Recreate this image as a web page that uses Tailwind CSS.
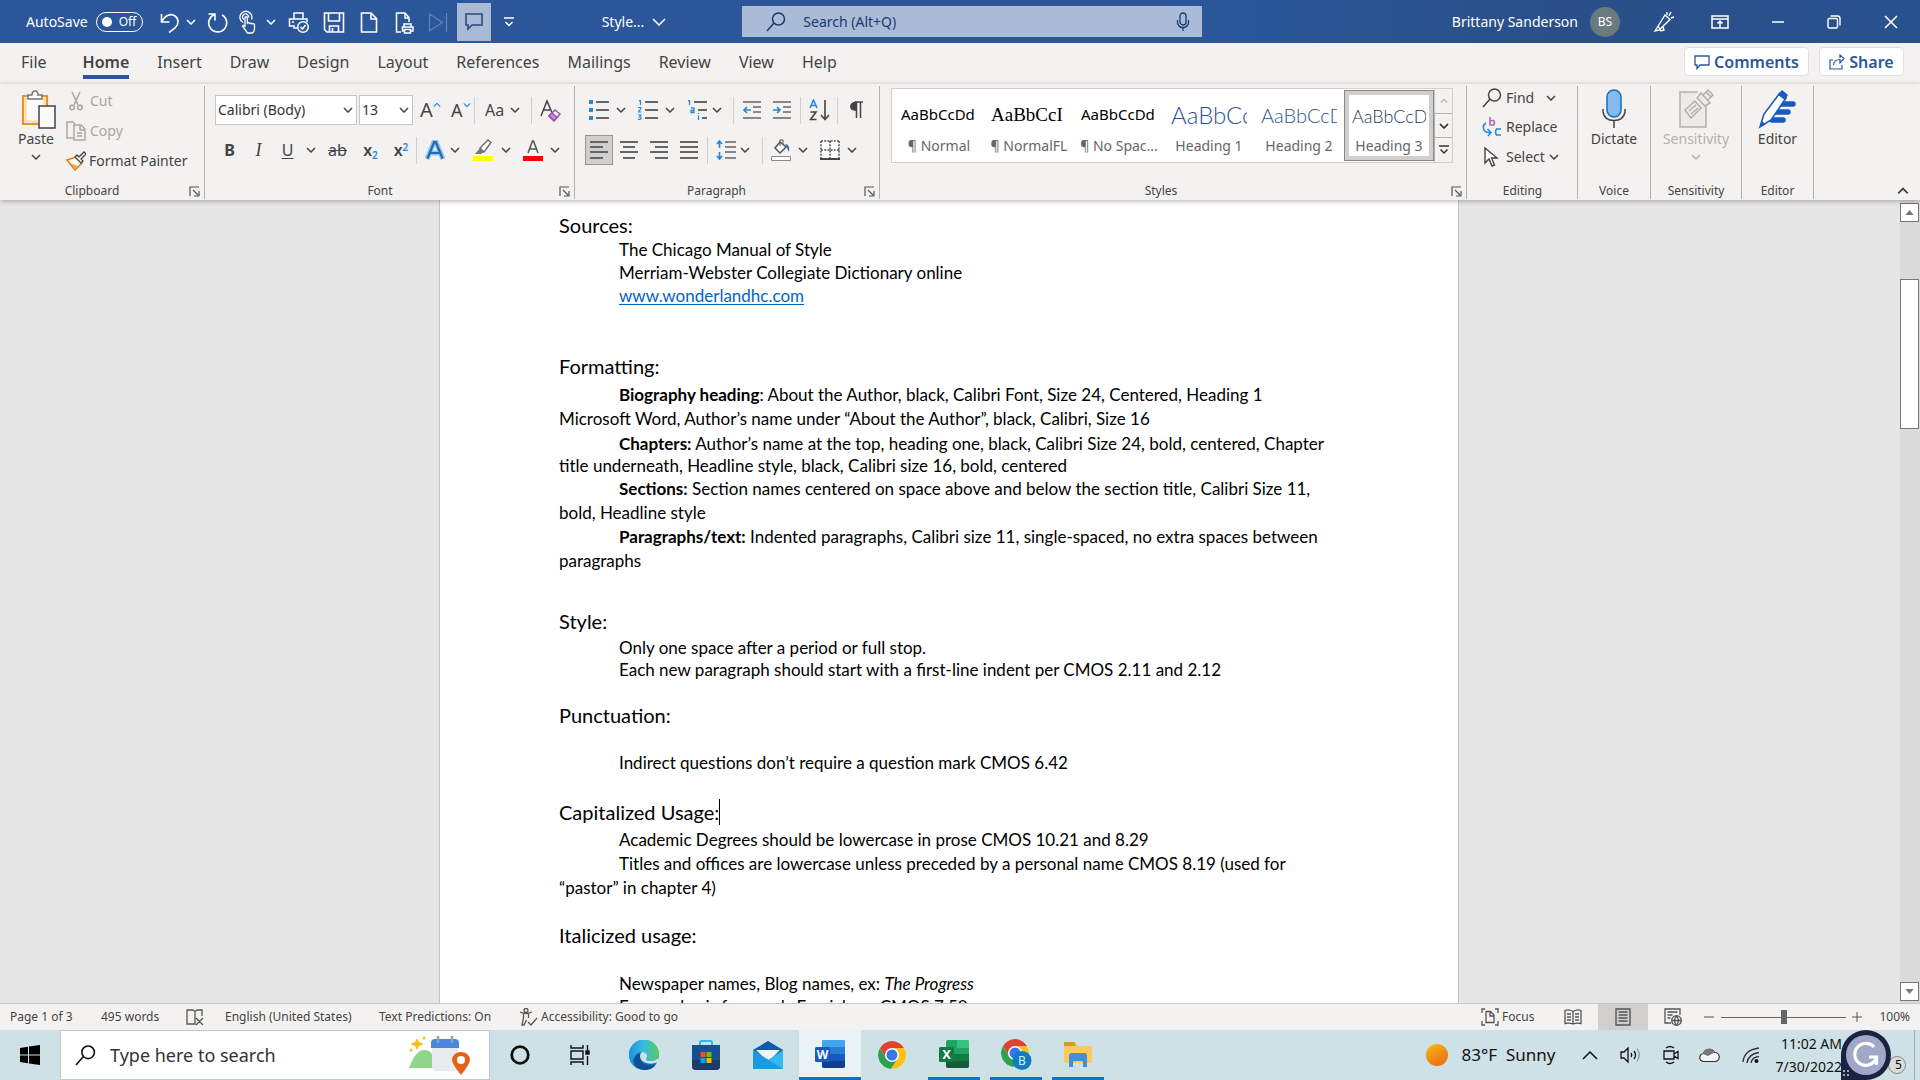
<!DOCTYPE html>
<html lang="en">
<head>
<meta charset="utf-8">
<title>Style Sheet - Word</title>
<script src="https://cdn.jsdelivr.net/npm/@tailwindcss/browser@4"></script>
</head>
<body class="flex h-screen flex-col overflow-hidden bg-[#e6e6e6] font-['Noto_Sans',sans-serif] text-sm text-[#444]">

<svg class="hidden" aria-hidden="true">
  <symbol id="chev" viewBox="0 0 10 6"><path d="M1 1l4 4 4-4" fill="none" stroke="currentColor" stroke-width="1.5"/></symbol>
  <symbol id="launch" viewBox="0 0 11 11"><path d="M1 10V1h9M4 4l5 5M10 5v5H5" fill="none" stroke="#555" stroke-width="1.2"/></symbol>
  <symbol id="lens" viewBox="0 0 20 20"><path d="M1 19l7-8" fill="none" stroke="currentColor" stroke-width="1.5"/><circle cx="12.500" cy="7" r="6" fill="none" stroke="currentColor" stroke-width="1.500"/></symbol>
  <symbol id="chrome" viewBox="0 0 30 30"><circle cx="15" cy="15" r="14" fill="#fff"/><path d="M2.900 8A14 14 0 0 1 27.100 8L15 8.500 9 18.500z" fill="#df4232"/><path d="M2.900 8A14 14 0 0 0 14 29l7-10.500L15 21.500 9 18.500z" fill="#2ba24c"/><path d="M27.100 8A14 14 0 0 1 14 29l7-10.500L20.500 12 15 8z" fill="#fbc116"/><circle cx="15" cy="15" r="7" fill="#fff"/><circle cx="15" cy="15" r="5.500" fill="#3a76e8"/></symbol>
</svg>

<!-- Title bar -->
<header class="flex h-[43px] shrink-0 items-center bg-[#2b579a] text-white">
  <label class="flex items-center gap-2 pl-[26px]">AutoSave
    <span class="relative flex h-5 w-[47px] items-center rounded-full border border-white pl-[22px] text-xs">
      <input type="checkbox" class="absolute left-[5px] h-2.5 w-2.5 appearance-none rounded-full bg-white">Off</span></label>
  <div class="flex items-center">
    <button class="ml-[17px] w-[20px]" aria-label="Undo"><svg class="h-6 w-5" viewBox="0 0 20 24" fill="none" stroke="#fff" stroke-width="1.600"><path d="M1.500 4v8h8M2 11.500C5 5 11 3 15 6s4 8 0 12l-6 4.500"/></svg></button>
    <button class="ml-[6px]" aria-label="Undo options"><svg class="h-1.5 w-2.5"><use href="#chev"/></svg></button>
    <button class="ml-[11px]" aria-label="Repeat"><svg class="h-6 w-[22px]" viewBox="0 0 22 24" fill="none" stroke="#fff" stroke-width="1.600"><path d="M1.500 4H8v6.500M7.500 4.500A9 9 0 1 0 15 5"/></svg></button>
    <button class="ml-[10px]" aria-label="Touch mode"><svg class="h-6 w-[18px]" viewBox="0 0 18 24" fill="none" stroke="#fff" stroke-width="1.300"><path d="M4 12.500a6 6 0 1 1 8.500-3M5 9.500a3 3 0 1 1 4.500-2M6 17V7.500q1.200-1.500 2.400 0V13q1.200-1 2.300.5 1.200-1 2.300.5 1.600-.8 2.500.5V19q-.5 3-2 4H8.500L3.500 16q1-1.500 2.500.5"/></svg></button>
    <button class="ml-[9px]" aria-label="Touch mode options"><svg class="h-1.5 w-2.5"><use href="#chev"/></svg></button>
    <button class="ml-[12px]" aria-label="Quick print"><svg class="h-6 w-[22px]" viewBox="0 0 22 24" fill="none" stroke="#fff" stroke-width="1.500"><path d="M6 9V3h9v6M9 18H6v-3M5 16H1.500V9H19v3M4 12h2"/><circle cx="15" cy="17" r="5.300"/><path d="M12.500 17l2 2 3-4"/></svg></button>
    <button class="ml-[13px]" aria-label="Save"><svg class="h-6 w-[22px]" viewBox="0 0 22 24" fill="none" stroke="#fff" stroke-width="1.600"><path d="M1.500 3h19v19H4l-2.500-2.500zM5.500 3v8h11V3M6.500 22v-6h9v6M9.500 18v4"/></svg></button>
    <button class="ml-[15px]" aria-label="New"><svg class="h-6 w-[18px]" viewBox="0 0 18 24" fill="none" stroke="#fff" stroke-width="1.600"><path d="M1.500 3H11l5.500 5.500V22h-15zM11 3v6h5.500"/></svg></button>
    <button class="ml-[17px]" aria-label="Print preview"><svg class="h-6 w-5" viewBox="0 0 20 24" fill="none" stroke="#fff" stroke-width="1.500"><path d="M6 22H1.500V3H10l4 4.500V12M10 3v5h4M9 17v-3h7v3M9 21H7.500v-4h10.500v4H16M9.500 19.500h6V23h-6z"/></svg></button>
    <button class="ml-[13px]" aria-label="Read aloud"><svg class="h-6 w-5" viewBox="0 0 20 24" fill="none" stroke="#6384b8" stroke-width="1.200"><path d="M1.500 4l13 8.500-13 8.500zM18.500 3v19"/></svg></button>
    <button class="ml-[9px] flex h-[38px] w-[34px] items-center justify-center bg-[#a9bad7]" aria-label="Comment"><svg class="h-5 w-[18px]" viewBox="0 0 18 20" fill="none" stroke="#2b4a80" stroke-width="1.600"><path d="M1 2h16v11H7l-4 4v-4H1z"/></svg></button>
    <button class="ml-[13px]" aria-label="Customize toolbar"><svg class="h-3 w-2.5" viewBox="0 0 10 12" fill="none" stroke="#fff" stroke-width="1.500"><path d="M0 2h10M1.500 6L5 9.500 8.500 6"/></svg></button>
  </div>
  <button class="ml-[88px] flex items-center gap-2">Style...<svg class="h-2 w-3.5" viewBox="0 0 14 8" fill="none" stroke="#fff" stroke-width="1.500"><path d="M1 1l6 6 6-6"/></svg></button>
  <label class="ml-[76px] flex h-[31px] w-[460px] items-center bg-[#a9bbd6] pr-3 pl-6 text-[#1b3a70]">
    <svg class="h-5 w-5"><use href="#lens"/></svg>
    <input class="ml-[17px] flex-1 outline-none placeholder:text-[#1b3a70]" placeholder="Search (Alt+Q)" aria-label="Search">
    <svg class="h-5 w-3.5" viewBox="0 0 14 20" fill="none" stroke="currentColor" stroke-width="1.300"><rect x="4" y="1" width="6" height="12" rx="3"/><path d="M1.500 8v3q1 4.500 5.500 4.500T12.500 11V8M7 15.500V19"/></svg>
  </label>
  <div class="flex h-full flex-1 items-center justify-end bg-linear-to-r from-[#2b579a] via-[#2a4f88] to-[#28518f] pr-[22px]">
    <span>Brittany Sanderson</span>
    <span class="ml-[12px] flex h-[30px] w-[30px] items-center justify-center rounded-full bg-[#6b7a80] text-xs">BS</span>
    <button class="ml-[33px]" aria-label="Draw"><svg class="h-[22px] w-[22px]" viewBox="0 0 22 22" fill="none" stroke="#fff" stroke-width="1.400"><path d="M2 20L12 4l5 4.500L6 19zM5 15l3 5 3-1-1-3M14 4V1M16 5l2-4M18 7l3-1"/></svg></button>
    <button class="ml-[36px]" aria-label="Ribbon display"><svg class="h-[18px] w-[18px]" viewBox="0 0 18 18" fill="none" stroke="#fff" stroke-width="1.500"><path d="M1 3h16v12H1zM1 6h16M9 14V8M6.500 10.500L9 8l2.500 2.500"/></svg></button>
    <button class="ml-[42px]" aria-label="Minimize"><svg class="h-3.5 w-3.5" viewBox="0 0 14 14"><path d="M1 7h12" stroke="#fff" stroke-width="1.500"/></svg></button>
    <button class="ml-[42px]" aria-label="Restore"><svg class="h-3.5 w-3.5" viewBox="0 0 14 14" fill="none" stroke="#fff" stroke-width="1.400"><rect x="1" y="3.500" width="9.500" height="9.500" rx="1.500"/><path d="M3.500 1h7q2.500 0 2.500 2.500v7"/></svg></button>
    <button class="ml-[43px]" aria-label="Close"><svg class="h-3.5 w-3.5" viewBox="0 0 14 14"><path d="M1 1l12 12M13 1L1 13" stroke="#fff" stroke-width="1.500"/></svg></button>
  </div>
</header>

<!-- Ribbon tabs -->
<nav class="flex h-[41px] shrink-0 items-center justify-between bg-[#f3f2f1] pr-4 pb-1 pl-[21px]">
  <div class="flex h-full items-center gap-7 text-base">
    <button class="mr-2">File</button>
    <button class="relative font-semibold">Home<span class="absolute inset-x-0 -bottom-[5px] h-1 bg-[#2b579a]"></span></button>
    <button>Insert</button><button>Draw</button><button>Design</button><button>Layout</button><button>References</button><button>Mailings</button><button>Review</button><button>View</button><button>Help</button>
  </div>
  <div class="flex gap-2.5 text-base font-semibold text-[#2b579a]">
    <button class="flex h-[29px] w-[125px] items-center justify-center gap-1 rounded-sm border border-[#e1dfdd] bg-white"><svg class="h-4 w-4" viewBox="0 0 16 16" fill="none" stroke="currentColor" stroke-width="1.300"><path d="M1 2h14v9H6l-3 3.500V11H1z"/></svg>Comments</button>
    <button class="flex h-[29px] w-[85px] items-center justify-center gap-1 rounded-sm border border-[#e1dfdd] bg-white"><svg class="h-4 w-4" viewBox="0 0 16 16" fill="none" stroke="currentColor" stroke-width="1.200"><path d="M4 6H1v9h12v-4M4.500 11Q5 5.500 11 5.500V9l4-4.500L11 1v3"/></svg>Share</button>
  </div>
</nav>

<!-- Ribbon -->
<section class="relative z-10 flex h-[116px] shrink-0 bg-[#f3f2f1] pt-[2px] pb-px shadow-[0_1px_5px_rgba(0,0,0,0.300)]">
  <!-- Clipboard -->
  <div class="flex w-[205px] flex-col border-r border-[#b3b0ad] pl-[15px]">
    <div class="flex flex-1">
      <button class="flex w-[42px] flex-col items-center justify-start pt-[3px]">
        <svg class="ml-1 h-10 w-9" viewBox="0 0 36 40"><path d="M3 7h24v28H3z" fill="#fff" stroke="#e8912d" stroke-width="2.200"/><path d="M5.500 9.500h19v23h-19z" fill="#fafafa" stroke="#fbdc9a" stroke-width="2"/><path d="M8 10V6h4q0-4 3-4t3 4h4v4z" fill="#fff" stroke="#777" stroke-width="1.500"/><path d="M19 17h16v22H19z" fill="#fafafa" stroke="#444" stroke-width="1.500"/></svg>
        Paste<svg class="mt-[5px] h-1.5 w-2.5"><use href="#chev"/></svg>
      </button>
      <div class="ml-[9px] flex flex-col">
        <button class="flex h-[30px] items-center gap-1 text-[#a8a6a4]"><svg class="h-5 w-5" viewBox="0 0 20 20" fill="none" stroke="currentColor" stroke-width="1.500"><path d="M6 1l6 13M14 1L8 14"/><circle cx="6" cy="16.500" r="2.300"/><circle cx="14" cy="16.500" r="2.300"/></svg>Cut</button>
        <button class="flex h-[30px] items-center gap-1 text-[#a8a6a4]"><svg class="h-5 w-5" viewBox="0 0 20 20" fill="none" stroke="currentColor" stroke-width="1.400"><path d="M8 17H1V1h6l2 2M8 4h7l4 4v11H8zM14 4v5h5M11 12h5M11 15h5"/></svg>Copy</button>
        <button class="flex h-[30px] items-center gap-[3px]"><svg class="h-5 w-5" viewBox="0 0 20 20"><path d="M1 9l9-3 6 6-7 7z" fill="#fff" stroke="#e07b1a" stroke-width="1.500"/><path d="M4 12l5 6 3-3z" fill="#f5a64a"/><path d="M9 6l2-2 2 2 5-5 2 2-5 5 2 2-2 2z" fill="#fff" stroke="#444" stroke-width="1.300"/></svg>Format Painter</button>
      </div>
    </div>
    <div class="flex items-center justify-between pr-1 text-xs"><span class="flex-1 pr-5 text-center">Clipboard</span><button aria-label="Clipboard settings"><svg class="h-[11px] w-[11px]"><use href="#launch"/></svg></button></div>
  </div>

  <!-- Font -->
  <div class="flex w-[370px] flex-col border-r border-[#b3b0ad] pl-2.5">
    <div class="mt-[9px] flex h-[30px] items-center">
      <div class="relative mr-0.5 w-[142px]"><select aria-label="Font" class="h-[30px] w-full appearance-none border border-[#c8c6c4] bg-white pl-0.5 text-[#333]"><option>Calibri (Body)</option></select><svg class="pointer-events-none absolute top-3 right-1 h-1.5 w-2.5"><use href="#chev"/></svg></div>
      <div class="relative w-[54px]"><select aria-label="Font size" class="h-[30px] w-full appearance-none border border-[#c8c6c4] bg-white pl-0.5 text-[#333]"><option>13</option></select><svg class="pointer-events-none absolute top-3 right-1 h-1.5 w-2.5"><use href="#chev"/></svg></div>
      <button class="ml-[7px] flex w-[26px] text-xl leading-6">A<svg class="mt-1 h-1.5 w-2 rotate-180 text-[#2b88d8]"><use href="#chev"/></svg></button>
      <button class="ml-[5px] flex w-[23px] text-lg leading-6">A<svg class="mt-1 h-1.5 w-2 text-[#2b88d8]"><use href="#chev"/></svg></button>
      <span class="h-[27px] w-px bg-[#d2d0ce]"></span>
      <button class="ml-[10px] flex items-center gap-1.5 text-base leading-6">Aa<svg class="h-1.5 w-2.5"><use href="#chev"/></svg></button>
      <span class="ml-[11px] h-[27px] w-px bg-[#d2d0ce]"></span>
      <button class="ml-[8px]" aria-label="Clear formatting"><svg class="h-6 w-[22px]" viewBox="0 0 22 24" fill="none" stroke-width="1.500"><path d="M1 18L7 3l6 14M3.500 12H10" stroke="#444"/><path d="M9 18l6-6 5 4-6 7z" fill="#f3f2f1" stroke="#9b4fae"/><path d="M9 18l3-3 5 4.500-3 3z" fill="#c88fd6" stroke="#9b4fae"/></svg></button>
    </div>
    <div class="mt-2.5 flex h-[30px] items-center text-base">
      <button class="w-[29px] font-bold">B</button>
      <button class="w-[29px] font-['Liberation_Serif',serif] text-lg italic">I</button>
      <button class="w-[29px] underline underline-offset-2">U</button>
      <button class="w-[18px] pl-1" aria-label="Underline options"><svg class="h-1.5 w-2.5"><use href="#chev"/></svg></button>
      <button class="w-[35px] line-through">ab</button>
      <button class="w-[31px] font-semibold">x<sub class="text-[10px] text-[#2b88d8]">2</sub></button>
      <button class="w-[30px] font-semibold">x<sup class="text-[10px] text-[#2b88d8]">2</sup></button>
      <span class="h-[27px] w-px bg-[#d2d0ce]"></span>
      <button class="ml-[8px] w-[20px]" aria-label="Text effects"><svg class="h-5 w-5" viewBox="0 0 20 20" fill="none"><path d="M2 19L9 2h2l7 17M5 13h10" stroke="#8ec3f0" stroke-width="5"/><path d="M2.500 18.500L9.200 2h1.600l6.700 16.500M5.500 13h9" stroke="#1f6bb8" stroke-width="2.200"/></svg></button>
      <button class="ml-[5px]" aria-label="Text effects options"><svg class="h-1.5 w-2.5"><use href="#chev"/></svg></button>
      <button class="ml-[13px]" aria-label="Highlight"><svg class="h-[22px] w-5" viewBox="0 0 20 22"><path d="M0 17h20v5H0z" fill="#ff0"/><path d="M7 9l8-8 3 2.500-7 9.500z" fill="#fff" stroke="#666" stroke-width="1.300"/><path d="M7 9l4 4-3 2H2z" fill="#777"/></svg></button>
      <button class="ml-2" aria-label="Highlight options"><svg class="h-1.5 w-2.5"><use href="#chev"/></svg></button>
      <button class="ml-[12px]" aria-label="Font colour"><svg class="h-[22px] w-5" viewBox="0 0 20 22"><path d="M0 17h20v5H0z" fill="#f00"/><path d="M5 14L9.500 2h1L15 14M6.500 10h7" fill="none" stroke="#555" stroke-width="1.500"/></svg></button>
      <button class="ml-[7px]" aria-label="Font colour options"><svg class="h-1.5 w-2.5"><use href="#chev"/></svg></button>
    </div>
    <div class="mt-auto flex items-center pr-1 text-xs"><span class="flex-1 pr-3.5 text-center">Font</span><button aria-label="Font settings"><svg class="h-[11px] w-[11px]"><use href="#launch"/></svg></button></div>
  </div>

  <!-- Paragraph -->
  <div class="flex w-[305px] flex-col border-r border-[#b3b0ad] pl-2.5">
    <div class="mt-[9px] flex h-[30px] items-center">
      <button class="ml-1" aria-label="Bullets"><svg class="h-5 w-5" viewBox="0 0 20 20"><path d="M0 0h4v4H0zM0 8h4v4H0zM0 16h4v4H0z" fill="#2b88d8"/><path d="M7 2h13M7 10h13M7 18h13" stroke="#666" stroke-width="1.800"/></svg></button>
      <button class="ml-[7px]" aria-label="Bullet options"><svg class="h-1.5 w-2.5"><use href="#chev"/></svg></button>
      <button class="ml-[12px]" aria-label="Numbering"><svg class="h-5 w-5" viewBox="0 0 20 20"><path d="M7 2h13M7 10h13M7 18h13" stroke="#666" stroke-width="1.800"/><path d="M1 1l1.500-1v5M0 8q3-1.500 3 0 0 1-3 4h3.500M0 15h3l-1.500 2q2 0 1.500 1.500T0 19" fill="none" stroke="#2b88d8" stroke-width="1.200"/></svg></button>
      <button class="ml-[7px]" aria-label="Numbering options"><svg class="h-1.5 w-2.5"><use href="#chev"/></svg></button>
      <button class="ml-[12px]" aria-label="Multilevel list"><svg class="h-5 w-5" viewBox="0 0 20 20"><path d="M7 2h13M11 10h9M15 18h5" stroke="#666" stroke-width="1.800"/><path d="M1 1l1.500-1v5M4 8h3v4.500H4v-2h3M11.500 15.500V20M11.500 13v1" fill="none" stroke="#2b88d8" stroke-width="1.300"/></svg></button>
      <button class="ml-[5px]" aria-label="Multilevel options"><svg class="h-1.5 w-2.5"><use href="#chev"/></svg></button>
      <span class="ml-[11px] h-[27px] w-px bg-[#d2d0ce]"></span>
      <button class="ml-[9px]" aria-label="Decrease indent"><svg class="h-5 w-[18px]" viewBox="0 0 18 20" fill="none" stroke-width="1.700"><path d="M0 2h18M10 7h8M10 12h8M0 18h18" stroke="#666"/><path d="M8 10H1M4 7l-3 3 3 3" stroke="#2b88d8"/></svg></button>
      <button class="ml-3" aria-label="Increase indent"><svg class="h-5 w-[18px]" viewBox="0 0 18 20" fill="none" stroke-width="1.700"><path d="M0 2h18M10 7h8M10 12h8M0 18h18" stroke="#666"/><path d="M0 10h7M4 7l3 3-3 3" stroke="#2b88d8"/></svg></button>
      <span class="ml-[9px] h-[27px] w-px bg-[#d2d0ce]"></span>
      <button class="ml-[8px]" aria-label="Sort"><svg class="h-[22px] w-[21px]" viewBox="0 0 21 22" fill="none" stroke-width="1.600"><path d="M1 9l3.500-8L8 9M2.500 6.500h4" stroke="#2b88d8"/><path d="M1.500 13H7l-5.500 7.500h6M16 1v19M12 16l4 4.500 4-4.500" stroke="#444"/></svg></button>
      <span class="ml-[7px] h-[27px] w-px bg-[#d2d0ce]"></span>
      <button class="ml-[11px]" aria-label="Show marks"><svg class="h-[18px] w-[14px]" viewBox="0 0 14 18"><path d="M6 1h8M7.500 1v16M11.500 1v16" fill="none" stroke="#444" stroke-width="1.500"/><path d="M7 .300v9.700Q1 9.500 1 5.500T7 .300z" fill="#444"/></svg></button>
    </div>
    <div class="mt-2.5 flex h-[30px] items-center">
      <button class="flex h-[30px] w-[28px] items-center justify-center border border-[#979593] bg-[#d0cfcd]" aria-label="Align left"><svg class="h-5 w-[18px]" viewBox="0 0 18 20"><path d="M0 2h18M0 7h13M0 12h18M0 18h13" stroke="#666" stroke-width="1.800"/></svg></button>
      <button class="ml-[7px]" aria-label="Centre"><svg class="h-5 w-[18px]" viewBox="0 0 18 20"><path d="M0 2h18M3 7h12M0 12h18M3 18h12" stroke="#666" stroke-width="1.800"/></svg></button>
      <button class="ml-3" aria-label="Align right"><svg class="h-5 w-[18px]" viewBox="0 0 18 20"><path d="M0 2h18M5 7h13M0 12h18M5 18h13" stroke="#666" stroke-width="1.800"/></svg></button>
      <button class="ml-3" aria-label="Justify"><svg class="h-5 w-[18px]" viewBox="0 0 18 20"><path d="M0 2h18M0 7h18M0 12h18M0 18h18" stroke="#666" stroke-width="1.800"/></svg></button>
      <span class="ml-[9px] h-[27px] w-px bg-[#d2d0ce]"></span>
      <button class="ml-[8px]" aria-label="Line spacing"><svg class="h-5 w-5" viewBox="0 0 20 20" fill="none" stroke-width="1.700"><path d="M9 2h11M9 7h11M9 12h11M9 18h11" stroke="#666"/><path d="M3.500 1v7M1 4l2.500-3L6 4M3.500 12v7M1 16l2.500 3L6 16" stroke="#2b88d8"/></svg></button>
      <button class="ml-1" aria-label="Line spacing options"><svg class="h-1.5 w-2.5"><use href="#chev"/></svg></button>
      <span class="ml-[12px] h-[27px] w-px bg-[#d2d0ce]"></span>
      <button class="ml-[8px]" aria-label="Shading"><svg class="h-[22px] w-5" viewBox="0 0 20 22"><path d="M.5 17.500h19v4H.5z" fill="#fff" stroke="#888"/><path d="M9 3l6 5-6 6-5-5z" fill="#fff" stroke="#555" stroke-width="1.500"/><path d="M9 7V1h3v4" fill="none" stroke="#555"/><path d="M14 5q5 0 4 8l-2-4z" fill="#1f6bb8"/></svg></button>
      <button class="ml-[7px]" aria-label="Shading options"><svg class="h-1.5 w-2.5"><use href="#chev"/></svg></button>
      <button class="ml-[12px]" aria-label="Borders"><svg class="h-5 w-5" viewBox="0 0 20 20"><path d="M1 1h18v18H1z" fill="#fff"/><path d="M1 1h18M1 10h18M1 1v18M10 1v18M19 1v18" stroke="#555" stroke-width="1.500" stroke-dasharray="2 1.200"/><path d="M0 19h20" stroke="#444" stroke-width="2"/></svg></button>
      <button class="ml-[7px]" aria-label="Border options"><svg class="h-1.5 w-2.5"><use href="#chev"/></svg></button>
    </div>
    <div class="mt-auto flex items-center pr-1 text-xs"><span class="flex-1 pr-4 text-center">Paragraph</span><button aria-label="Paragraph settings"><svg class="h-[11px] w-[11px]"><use href="#launch"/></svg></button></div>
  </div>

  <!-- Styles -->
  <div class="flex w-[587px] flex-col border-r border-[#b3b0ad] pl-[11px]">
    <div class="mt-[2px] flex h-[75px] w-[562px] border border-[#d2d0ce] bg-white whitespace-nowrap text-[#666]">
      <button class="ml-0.5 flex w-[90px] flex-col items-center justify-start"><span class="flex h-[47px] w-[76px] items-center overflow-hidden pt-1 text-[15px] text-black">AaBbCcDd</span>¶ Normal</button>
      <button class="flex w-[90px] flex-col items-center justify-start"><span class="flex h-[47px] w-[76px] items-center overflow-hidden pt-1 font-['Liberation_Serif',serif] text-[19px] text-black">AaBbCcI</span>¶ NormalFL</button>
      <button class="flex w-[90px] flex-col items-center justify-start"><span class="flex h-[47px] w-[76px] items-center overflow-hidden pt-1 text-[15px] text-black">AaBbCcDd</span>¶ No Spac...</button>
      <button class="flex w-[90px] flex-col items-center justify-start"><span class="flex h-[47px] w-[76px] items-center overflow-hidden pt-1 font-['Lato',sans-serif] text-2xl font-light text-[#2f5496]">AaBbCc</span>Heading 1</button>
      <button class="flex w-[90px] flex-col items-center justify-start"><span class="flex h-[47px] w-[76px] items-center overflow-hidden pt-1 font-['Lato',sans-serif] text-xl font-light text-[#2f5496]">AaBbCcD</span>Heading 2</button>
      <button class="mt-px flex h-[71px] w-[90px] flex-col items-center justify-start border border-[#8a8886] bg-white shadow-[inset_0_0_0_4px_#d0cfcd]"><span class="flex h-[45px] w-[74px] items-center overflow-hidden pt-1 font-['Lato',sans-serif] text-lg font-light text-[#1f3763]">AaBbCcDd</span>Heading 3</button>
      <div class="ml-auto flex w-[18px] flex-col bg-[#f3f2f1]">
        <button class="flex flex-1 items-center justify-center border-l border-[#c8c6c4] text-[#b3b0ad]" aria-label="Scroll up"><svg class="h-1.5 w-2 rotate-180"><use href="#chev"/></svg></button>
        <button class="flex flex-1 items-center justify-center border border-r-0 border-[#b3b0ad] text-[#222]" aria-label="Scroll down"><svg class="h-1.5 w-2.5"><use href="#chev"/></svg></button>
        <button class="flex flex-1 items-center justify-center border-l border-[#b3b0ad]" aria-label="More styles"><svg class="h-2.5 w-2.5" viewBox="0 0 10 10" fill="none" stroke="#333" stroke-width="1.500"><path d="M0 1h10M1.500 4.500L5 8l3.500-3.500"/></svg></button>
      </div>
    </div>
    <div class="mt-auto flex items-center pr-1 text-xs"><span class="flex-1 pr-5 text-center">Styles</span><button aria-label="Style settings"><svg class="h-[11px] w-[11px]"><use href="#launch"/></svg></button></div>
  </div>

  <!-- Editing -->
  <div class="flex w-[111px] flex-col border-r border-[#b3b0ad] pl-[15px]">
    <button class="flex h-[23px] items-center gap-1"><svg class="h-5 w-5"><use href="#lens"/></svg>Find<svg class="ml-2 h-1.5 w-2.5"><use href="#chev"/></svg></button>
    <button class="mt-1.5 flex h-[24px] items-center gap-1"><svg class="h-5 w-5" viewBox="0 0 20 20" fill="none" stroke-width="1.600"><path d="M8 0v8h3.500q2-2.500 0-4.500H8" stroke="#b069b8"/><path d="M19 12h-4.500q-2 3 0 6H19M4 6q-4 2-2 7 1.500 3 6 2.500M5.500 12L9 15.500 6 19" stroke="#2b88d8"/></svg>Replace</button>
    <button class="mt-1.5 flex h-[23px] items-center gap-1"><svg class="h-5 w-5" viewBox="0 0 20 20"><path d="M3 1v15l4-4 3 7 2.500-1-3-7H15z" fill="#fff" stroke="#444" stroke-width="1.400"/></svg>Select<svg class="h-1.5 w-2.5"><use href="#chev"/></svg></button>
    <div class="mt-auto pr-3.5 text-center text-xs">Editing</div>
  </div>
  <!-- Voice -->
  <div class="flex w-[73px] flex-col items-center border-r border-[#b3b0ad]">
    <button class="flex flex-col items-center pt-[3px]"><svg class="h-10 w-6" viewBox="0 0 24 40"><rect x="5" y="1" width="14" height="27" rx="7" fill="#83bbec" stroke="#1f6bb8" stroke-width="1.500"/><path d="M1 20v3q1.500 8.500 11 8.500T23 23v-3M12 31.500V39" fill="none" stroke="#444" stroke-width="1.500"/></svg>Dictate</button>
    <div class="mt-auto text-xs">Voice</div>
  </div>
  <!-- Sensitivity -->
  <div class="flex w-[91px] flex-col items-center border-r border-[#b3b0ad]">
    <button class="flex flex-col items-center pt-[3px] text-[#b3b0ad]"><svg class="h-10 w-9" viewBox="0 0 36 40" fill="#ecebea" stroke="currentColor" stroke-width="1.500"><path d="M2 3h26v35H2z"/><path d="M22 0l-6 8 3 6h14V2z" fill="#f3f2f1" stroke="none"/><path d="M7 21L17 12l6 7-10 10zM11 22l7-6M13 25l7-6"/><path d="M19 9l4-5 9 10-5 3zM25 6l5-5 5 5-5 5M28 3l5 5"/></svg>Sensitivity<svg class="mt-[5px] h-1.5 w-2.5"><use href="#chev"/></svg></button>
    <div class="mt-auto text-xs">Sensitivity</div>
  </div>
  <!-- Editor -->
  <div class="flex w-[72px] flex-col items-center border-r border-[#b3b0ad]">
    <button class="flex flex-col items-center pt-[3px]"><svg class="h-10 w-10" viewBox="0 0 40 40"><path d="M20 15h15M18 23h12M14 31h11" stroke="#185abd" stroke-width="5.500" stroke-linecap="round"/><path d="M2 38l4-13L22 4l6 5-15 22z" fill="#fff" stroke="#185abd" stroke-width="1.600"/><path d="M20 6l4-5 6 5-3 5z" fill="#185abd"/><path d="M2 38l1.500-6 4 3z" fill="#185abd"/></svg>Editor</button>
    <div class="mt-auto text-xs">Editor</div>
  </div>
  <button class="mr-[11px] mb-1 ml-auto self-end" aria-label="Collapse ribbon"><svg class="h-2 w-3 rotate-180"><use href="#chev"/></svg></button>
</section>

<!-- Document -->
<div class="relative flex min-h-0 flex-1 border-b border-[#c6c6c6]">
  <div class="min-w-0 flex-1 overflow-hidden pl-[439px]">
    <main class="h-[860px] w-[1020px] border-x border-[#c6c6c6] bg-white pt-[14px] pr-[120px] pl-[119px] font-['Lato',sans-serif] text-[17px] leading-6 whitespace-nowrap text-black">
      <h3 class="pb-0.5 text-xl leading-[22px]">Sources:</h3>
      <div class="pl-[60px] leading-[23px]"><p>The Chicago Manual of Style</p><p>Merriam-Webster Collegiate Dictionary online</p><p><a href="#" class="text-[#0563c1] underline underline-offset-2">www.wonderlandhc.com</a></p></div>
      <h3 class="mt-12 pb-0.5 text-xl leading-[22px]">Formatting:</h3>
      <p class="mt-1 indent-[60px]"><b>Biography heading</b>: About the Author, black, Calibri Font, Size 24, Centered, Heading 1</p>
      <p>Microsoft Word, Author’s name under “About the Author”, black, Calibri, Size 16</p>
      <p class="mt-0.5 indent-[60px] leading-[22px]"><b>Chapters:</b> Author’s name at the top, heading one, black, Calibri Size 24, bold, centered, Chapter</p>
      <p class="leading-[22px]">title underneath, Headline style, black, Calibri size 16, bold, centered</p>
      <p class="indent-[60px]"><b>Sections:</b> Section names centered on space above and below the section title, Calibri Size 11,</p>
      <p>bold, Headline style</p>
      <p class="indent-[60px]"><b>Paragraphs/text:</b> Indented paragraphs, Calibri size 11, single-spaced, no extra spaces between</p>
      <p>paragraphs</p>
      <h3 class="mt-[37px] pb-0.5 text-xl leading-[22px]">Style:</h3>
      <div class="mt-[3px] pl-[60px] leading-[22px]"><p>Only one space after a period or full stop.</p><p>Each new paragraph should start with a first-line indent per CMOS 2.11 and 2.12</p></div>
      <h3 class="mt-[23px] pb-0.5 text-xl leading-[22px]">Punctuation:</h3>
      <p class="mt-[23px] indent-[60px]">Indirect questions don’t require a question mark CMOS 6.42</p>
      <h3 class="mt-[26px] flex pb-0.5 text-xl leading-[22px]">Capitalized Usage:<span class="-my-0.5 w-px bg-black"></span></h3>
      <p class="mt-[3px] indent-[60px]">Academic Degrees should be lowercase in prose CMOS 10.21 and 8.29</p>
      <p class="indent-[60px]">Titles and offices are lowercase unless preceded by a personal name CMOS 8.19 (used for</p>
      <p>“pastor” in chapter 4)</p>
      <h3 class="mt-6 pb-0.5 text-xl leading-[22px]">Italicized usage:</h3>
      <div class="mt-6 pl-[60px] leading-[23px]"><p>Newspaper names, Blog names, ex: <i>The Progress</i></p><p>For emphasis for words Fasc<i>ial</i> use CMOS 7.50</p></div>
    </main>
  </div>
  <div class="flex w-5 flex-col bg-[#dadada] pt-[3px] pr-px pb-[2px]">
    <button class="flex h-[19px] items-center justify-center border border-[#777] bg-white" aria-label="Scroll up"><svg class="h-[5px] w-[9px]" viewBox="0 0 10 6"><path d="M0 6l5-6 5 6z" fill="#777"/></svg></button>
    <div class="mt-[57px] h-[150px] border border-[#777] bg-white"></div>
    <button class="mt-auto flex h-[19px] items-center justify-center border border-[#777] bg-white" aria-label="Scroll down"><svg class="h-[5px] w-[9px]" viewBox="0 0 10 6"><path d="M0 0l5 6 5-6z" fill="#777"/></svg></button>
  </div>
</div>

<!-- Status bar -->
<footer class="flex h-[26px] shrink-0 items-center bg-[#f3f2f1] pr-2.5 pl-2.5 text-xs">
  <span class="w-[91px]">Page 1 of 3</span><span class="w-[85px]">495 words</span>
  <svg class="h-[18px] w-[18px]" viewBox="0 0 18 18" fill="none" stroke="#555" stroke-width="1.300"><path d="M9 3v13H1V2h6l2 1.500L11 2h5v6M10 10l7 7M17 10l-7 7"/></svg>
  <span class="ml-[21px] w-[154px]">English (United States)</span>
  <span class="w-[140px]">Text Predictions: On</span>
  <svg class="h-[18px] w-[19px]" viewBox="0 0 19 18" fill="none" stroke="#555" stroke-width="1.300"><circle cx="7" cy="2.500" r="2"/><path d="M1 4q6 3 12 0M4.500 6v4L3 17h2l2.500-5M9.500 6v4M9 14l3 3 6-7"/></svg>
  <span class="ml-[3px]">Accessibility: Good to go</span>
  <button class="ml-auto flex items-center gap-[3px]"><svg class="h-[18px] w-[18px]" viewBox="0 0 18 18" fill="none" stroke="#555" stroke-width="1.300"><path d="M1 5V1h3M14 1h3v4M17 13v4h-3M4 17H1v-4M5 3.500h4.500L13 7v7.500H5zM9 4v4h4"/></svg>Focus</button>
  <button class="ml-[30px]" aria-label="Read mode"><svg class="h-4 w-[18px]" viewBox="0 0 18 16" fill="none" stroke="#555" stroke-width="1.300"><path d="M9 2.500Q5 0 1 1.500v13q4-1 8 .5 4-1.500 8-.5v-13Q13 0 9 2.500V15M3 5h4M3 8h4M3 11h4M11 5h4M11 8h4M11 11h4"/></svg></button>
  <button class="ml-4 flex h-[26px] w-[50px] items-center justify-center bg-[#d0cfcd]" aria-label="Print layout"><svg class="h-[18px] w-4" viewBox="0 0 16 18" fill="none" stroke="#555" stroke-width="1.400"><path d="M1 1h14v16H1zM3.500 4h9M3.500 7h9M3.500 10h9M3.500 13h9"/></svg></button>
  <button class="ml-4" aria-label="Web layout"><svg class="h-[18px] w-[18px]" viewBox="0 0 18 18" fill="none" stroke="#555" stroke-width="1.300"><path d="M7 15H1V1h15v6M3.500 4h10M3.500 7h5M3.500 10h3"/><circle cx="12.500" cy="12.500" r="4.800"/><path d="M7.500 12.500h10M12.500 8q-4 4.500 0 9M12.500 8q4 4.500 0 9"/></svg></button>
  <button class="ml-[22px]" aria-label="Zoom out"><svg class="h-2.5 w-2.5" viewBox="0 0 10 10"><path d="M0 5h10" stroke="#555"/></svg></button>
  <span class="relative ml-[7px] flex w-[125px] items-center"><span class="h-px w-full bg-[#666]"></span><span class="absolute left-[60px] h-3.5 w-1.5 bg-[#666]"></span></span>
  <button class="ml-[6px]" aria-label="Zoom in"><svg class="h-2.5 w-2.5" viewBox="0 0 10 10"><path d="M0 5h10M5 0v10" stroke="#555"/></svg></button>
  <span class="ml-[17px]">100%</span>
</footer>

<!-- Taskbar -->
<div class="relative flex h-[50px] shrink-0 items-center bg-[#cde1e6] text-[#111]">
  <button class="flex w-[60px] justify-center" aria-label="Start"><svg class="h-5 w-5" viewBox="0 0 20 20"><path d="M0 3l8-1.200V9.500H0zM9 1.600L20 0v9.500H9zM0 10.500h8v7.700L0 17zM9 10.500h11V20L9 18.400z"/></svg></button>
  <label class="flex h-full w-[430px] items-center border border-[#bfc8cb] bg-white pr-[18px] pl-[14px]">
    <svg class="h-[21px] w-[21px]"><use href="#lens"/></svg>
    <input class="ml-[14px] min-w-0 flex-1 text-lg outline-none placeholder:text-[#333]" placeholder="Type here to search" aria-label="Taskbar search">
    <svg class="h-10 w-[62px]" viewBox="0 0 62 40"><path d="M0 33q8-22 20-17 6 3 6 17z" fill="#8ed68a"/><rect x="23" y="4" width="26" height="32" rx="4" fill="#e8eaee"/><path d="M22 13V8q0-4 4-4h20q4 0 4 4v5z" fill="#4b86dd"/><path d="M29 1v7M43 1v7" stroke="#8aa0c8" stroke-width="2.500"/><path d="M8 3l2 4 5 2-5 2-2 4-2-4-5-2 5-2z" fill="#f5c211"/><circle cx="2" cy="15" r="1.500" fill="#f5c211"/><circle cx="15" cy="3" r="1.500" fill="#f5c211"/><path d="M52 40q-9-11-9-15a9 8 0 0 1 18 0q0 4-9 15z" fill="#e8611a"/><circle cx="52" cy="25" r="4" fill="#fff"/></svg>
  </label>
  <nav class="flex h-full">
    <button class="flex w-[60px] items-center justify-center" aria-label="Cortana"><svg class="h-5 w-5" viewBox="0 0 20 20"><circle cx="10" cy="10" r="8.300" fill="none" stroke="#111" stroke-width="2.800"/></svg></button>
    <button class="mr-[3px] flex w-[60px] items-center justify-center" aria-label="Task view"><svg class="h-5 w-5" viewBox="0 0 20 20" fill="none" stroke="#111" stroke-width="1.400"><path d="M1 0v3h12V0M1 20v-3h12v3M1 6h12v8H1zM17.500 0v5M17.500 11v9"/><path d="M16 6h3v3h-3z" fill="#111"/></svg></button>
    <button class="flex w-[62px] items-center justify-center" aria-label="Edge"><svg class="h-[30px] w-[30px]" viewBox="0 0 30 30"><defs><linearGradient id="e1"><stop offset="0" stop-color="#1d93dc"/><stop offset=".5" stop-color="#35bde0"/><stop offset="1" stop-color="#5ccb5a"/></linearGradient></defs><circle cx="15" cy="15" r="15" fill="#1268b8"/><path d="M0 15A15 15 0 0 1 30 14q0 7-8 7-5 0-5-2 2-2 1-4-1-3-5-3-6 0-8 6-3 4 1 8-6-4-6-11z" fill="url(#e1)"/><path d="M12 14q-3 6 3 10 6 3 12 0-3 6-12 6Q5 29 5 20q1-6 7-6z" fill="#0f4f96"/><path d="M17 19q2-2 1-4-1-3-5-3-2 1-2 4 0 5 6 7t12-1l1-5q-3 4-8 4-5 0-5-2z" fill="#cde1e6"/></svg></button>
    <button class="flex w-[62px] items-center justify-center" aria-label="Store"><svg class="h-[30px] w-[30px]" viewBox="0 0 30 30"><path d="M9 8V2.500q0-1.500 1.500-1.500h9q1.500 0 1.500 1.500V8" fill="none" stroke="#35b6e8" stroke-width="2"/><path d="M1 5h28v21q0 4-4 4H5q-4 0-4-4z" fill="#17508f"/><path d="M1 20h28v6q0 4-4 4H5q-4 0-4-4z" fill="#1b3c6c"/><path d="M9.500 12h5v5h-5z" fill="#f25022"/><path d="M15.500 12h5v5h-5z" fill="#7fba00"/><path d="M9.500 18h5v5h-5z" fill="#00a4ef"/><path d="M15.500 18h5v5h-5z" fill="#ffb900"/></svg></button>
    <button class="flex w-[62px] items-center justify-center" aria-label="Mail"><svg class="h-[30px] w-[30px]" viewBox="0 0 30 30"><path d="M0 10L15 1l15 9v19H0z" fill="#0f5ba8"/><path d="M3 10h24l-12 12z" fill="#f2f2f2"/><path d="M0 10l15 10L30 10v19H0z" fill="#35b8f0"/><path d="M0 10l30 19H0z" fill="#1d97e0"/></svg></button>
    <button class="flex w-[62px] items-center justify-center border-b-[3px] border-[#0a74cc] bg-[#e9f2f5]" aria-label="Word"><svg class="h-7 w-[30px]" viewBox="0 0 30 28"><rect x="7" width="23" height="28" rx="2" fill="#2b7cd3"/><path d="M7 2q0-2 2-2h19q2 0 2 2v5H7z" fill="#41a5ee"/><path d="M7 14h23v7H7z" fill="#185abd"/><path d="M7 21h23v5q0 2-2 2H9q-2 0-2-2z" fill="#103f91"/><rect y="7" width="15" height="15" rx="1.500" fill="#185abd"/><text x="7.500" y="18.500" text-anchor="middle" font-family="Noto Sans" font-weight="700" font-size="12" fill="#fff">W</text></svg></button>
    <button class="flex w-[62px] items-center justify-center" aria-label="Chrome"><svg class="h-[30px] w-[30px]"><use href="#chrome"/></svg></button>
    <button class="mx-[5px] flex w-[52px] items-center justify-center border-b-[3px] border-[#0a74cc]" aria-label="Excel"><svg class="h-7 w-[30px]" viewBox="0 0 30 28"><rect x="7" width="23" height="28" rx="2" fill="#21a366"/><path d="M18 0h10q2 0 2 2v6H18z" fill="#33c481"/><path d="M7 14h11v7H7z" fill="#107c41"/><path d="M7 21h23v5q0 2-2 2H9q-2 0-2-2z" fill="#185c37"/><path d="M18 14h12v7H18z" fill="#107c41"/><rect y="7" width="15" height="15" rx="1.500" fill="#107c41"/><text x="7.500" y="18.500" text-anchor="middle" font-family="Noto Sans" font-weight="700" font-size="13" fill="#fff">X</text></svg></button>
    <button class="mx-[5px] flex w-[52px] items-center justify-center border-b-[3px] border-[#0a74cc]" aria-label="Chrome profile"><svg class="h-8 w-8" viewBox="0 0 32 32"><use href="#chrome" width="30" height="30"/><circle cx="22" cy="22.500" r="9.500" fill="#0f7cc4"/><text x="22" y="27" text-anchor="middle" font-family="Noto Sans" font-size="12" fill="#d8ecf8">B</text></svg></button>
    <button class="mx-[5px] flex w-[52px] items-center justify-center border-b-[3px] border-[#0a74cc]" aria-label="File Explorer"><svg class="h-[26px] w-7" viewBox="0 0 28 26"><path d="M0 1h11l3 4h14v17H0z" fill="#fcc95f"/><path d="M0 1h10l2 3-1 1H0z" fill="#dc9a1c"/><path d="M5 26V15q0-3 3-3h12q3 0 3 3v11h-4v-5q0-1-1-1h-8q-1 0-1 1v5z" fill="#3a93dc"/></svg></button>
  </nav>
  <div class="ml-auto flex items-center pr-[78px]">
    <svg class="h-[22px] w-[22px]" viewBox="0 0 22 22"><defs><linearGradient id="sun" x2="0.500" y2="1"><stop offset="0" stop-color="#fbb914"/><stop offset="1" stop-color="#ea7414"/></linearGradient></defs><circle cx="11" cy="11" r="11" fill="url(#sun)"/></svg>
    <span class="ml-[14px] text-[17px] whitespace-pre">83°F  Sunny</span>
    <svg class="ml-[26px] h-2.5 w-4" viewBox="0 0 16 10"><path d="M1 9l7-7 7 7" fill="none" stroke="#111" stroke-width="1.500"/></svg>
    <svg class="ml-[22px] h-5 w-[21px]" viewBox="0 0 21 20" fill="none" stroke="#111" stroke-width="1.300"><path d="M1 7h3l4-4v14l-4-4H1zM11 8q1.500 2 0 4M14 6q3 4 0 8"/><path d="M17 3.500q4.500 6.500 0 13" stroke="#8a999d"/></svg>
    <svg class="ml-[22px] h-5 w-4" viewBox="0 0 16 20" fill="none" stroke="#111" stroke-width="1.300"><path d="M1 6h10v8H1zM11 9l4-2.500v7L11 11M3 3q4-3 8 0M3 17q4 3 8 0"/></svg>
    <svg class="ml-[20px] h-4 w-[21px]" viewBox="0 0 21 16"><path d="M5 14.500a4 4 0 0 1-.5-8 6 6 0 0 1 11-1 4.500 4.500 0 0 1 .5 9z" fill="#f4f4f4" stroke="#333" stroke-width="1.200"/><path d="M4 7a6 6 0 0 1 11.500-1.500L9 9z" fill="#777"/></svg>
    <svg class="ml-[22px] h-[18px] w-[18px]" viewBox="0 0 18 18" fill="none" stroke="#333" stroke-width="1.300"><path d="M1 16Q2 4 17 2M5 17Q6 8 17 6.500M9 17q1-6 8-6.500"/><circle cx="14.500" cy="15" r="2" fill="#111" stroke="none"/></svg>
    <div class="ml-[16px] text-right text-sm leading-[23px]"><div>11:02 AM</div><div>7/30/2022</div></div>
  </div>
  <div class="absolute right-[14px] bottom-[6px] h-[18px] w-[18px] rounded-full border border-[#888] bg-[#dcdcdc] pl-1.5 text-xs">5</div>
  <button class="absolute right-[28px] bottom-0 h-[50px] w-[52px]" aria-label="Grammarly"><svg class="h-full w-full" viewBox="0 0 52 50"><path d="M1 25A25 25 0 1 1 26 50H1z" fill="#1b2240"/><circle cx="26" cy="25" r="20" fill="#a0a7c8"/><path d="M34 17a11 11 0 1 0 2.500 10H29M36.500 35v-8" fill="none" stroke="#fff" stroke-width="3.200"/><g fill="#cfd4ea"><circle cx="4" cy="41" r="1"/><circle cx="8" cy="41" r="1"/><circle cx="4" cy="45" r="1"/><circle cx="8" cy="45" r="1"/></g></svg></button>
  <span class="absolute inset-y-0 right-[5px] w-px bg-[#9fb0b5]"></span>
</div>
</body>
</html>
